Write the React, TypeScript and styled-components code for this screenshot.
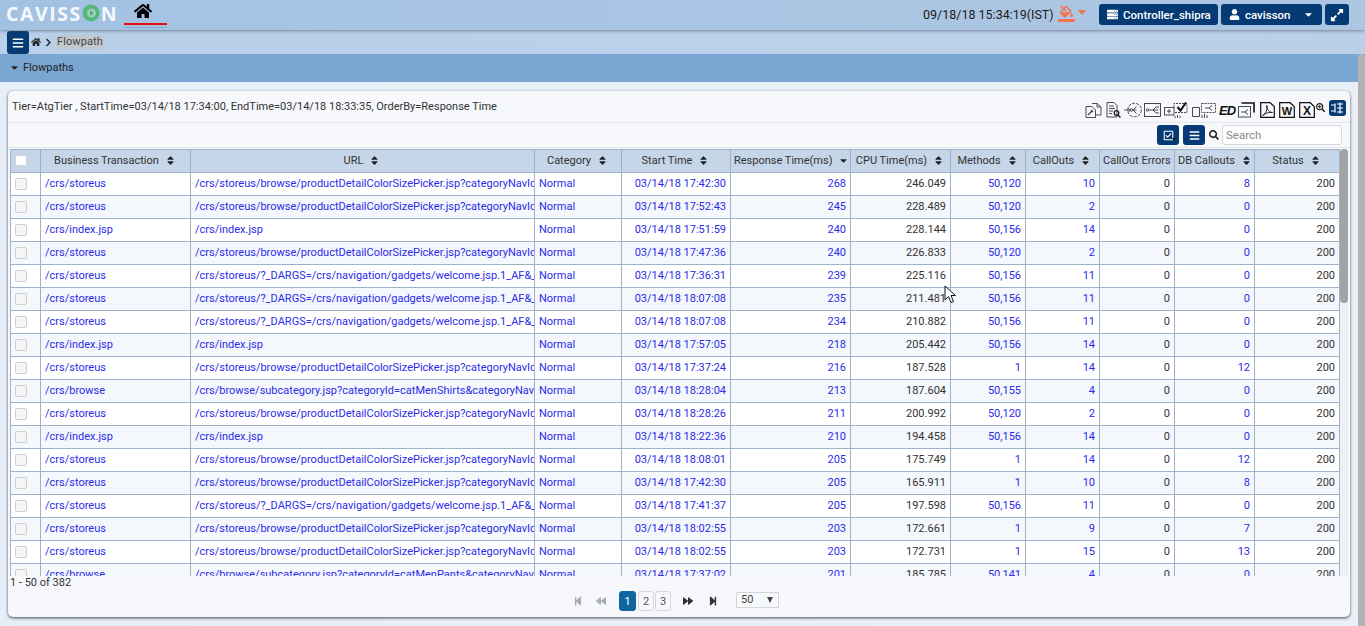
import React from "react";
import styled, { createGlobalStyle } from "styled-components";
import { FaHome, FaBars, FaSort, FaCaretDown, FaChevronRight, FaUser, FaExpandAlt, FaSearch, FaRegCheckSquare, FaStepBackward, FaStepForward, FaBackward, FaForward, FaServer, FaFillDrip, FaSearchPlus } from "react-icons/fa";

const Global = createGlobalStyle`
  html, body { margin: 0; padding: 0; height: 626px; overflow: hidden; background: #e8eff7; }
  body { font-family: Roboto, "Liberation Sans", sans-serif; font-size: 11px; color: #333; }
  * { box-sizing: border-box; }
`;

const Page = styled.div`
  position: relative;
  width: 1365px;
  height: 626px;
  overflow: hidden;
  background: linear-gradient(90deg, #e6eef7, #e9f0f8);
`;
const TopBar = styled.header`
  position: relative;
  z-index: 2;
  height: 30px;
  display: flex;
  align-items: flex-start;
  background: linear-gradient(90deg, #a3c2e2, #a9c5e3 50%, #adc6e2);
  box-shadow: 0 1px 3px rgba(60, 70, 90, 0.55);
`;
const Logo = styled.div`
  position: absolute;
  left: 6px;
  top: 2px;
  display: flex;
  align-items: center;
  height: 22px;
  color: #f4f8fc;
  font-family: "Open Sans", sans-serif;
  font-weight: 700;
  font-size: 19.5px;
  letter-spacing: 1.55px;
  svg { margin: 0 1px 0 0; }
`;
const HomeTab = styled.div`
  position: absolute;
  left: 124px;
  top: 0;
  width: 43px;
  height: 28px;
  display: flex;
  justify-content: center;
  padding: 2px 5px 0 0;
  color: #000;
  font-size: 18px;
  border-bottom: 1px solid #8fa9c6;
  &::after {
    content: "";
    position: absolute;
    left: 0;
    right: 0;
    top: 23px;
    height: 2px;
    background: #e60c0c;
  }
`;
const DateText = styled.span`
  position: absolute;
  left: 923px;
  top: 7px;
  font-size: 12.5px;
  color: #1c1c1c;
`;
const Paint = styled.div`
  position: absolute;
  left: 1058px;
  top: 5px;
  color: #f5744d;
  font-size: 13px;
  width: 17px;
  height: 17px;
  border-bottom: 3px solid #f5744d;
  display: flex;
  justify-content: center;
`;
const PaintCaret = styled.div`
  position: absolute;
  left: 1078px;
  top: 10px;
  width: 0;
  height: 0;
  border: 4.5px solid transparent;
  border-top: 5px solid #f5744d;
  border-bottom: 0;
`;
const NavButton = styled.div<{ $left: number; $width: number; $center?: boolean }>`
  position: absolute;
  left: ${p => p.$left}px;
  top: 4px;
  width: ${p => p.$width}px;
  height: 21px;
  border-radius: 3px;
  background: #053a74;
  color: #fff;
  font-size: 11.5px;
  font-weight: 500;
  display: flex;
  align-items: center;
  justify-content: ${p => (p.$center ? "center" : "flex-start")};
  padding: ${p => (p.$center ? "0" : "0 8px")};
  gap: 5px;
  svg { font-size: 11px; flex: none; }
`;
const NavCaret = styled.span`
  margin-left: auto;
  display: flex;
  font-size: 12px;
`;
const BigIcon = styled.span`
  display: flex;
  svg { font-size: 14px; }
`;
const Crumbs = styled.nav`
  position: relative;
  height: 24px;
  background: linear-gradient(90deg, #b9d0ea, #bccfe8);
  display: flex;
  align-items: center;
  padding-left: 7px;
`;
const MenuButton = styled.div`
  width: 22px;
  height: 23px;
  margin-top: 1px;
  background: #053a74;
  color: #fff;
  border-radius: 3px;
  display: flex;
  align-items: center;
  justify-content: center;
  font-size: 12px;
`;
const CrumbIcon = styled.span<{ $ml: number; $size: number }>`
  display: flex;
  margin-left: ${p => p.$ml}px;
  font-size: ${p => p.$size}px;
  color: #222;
`;
const CrumbText = styled.span`
  margin-left: 3px;
  padding: 0 1px;
  background: #c3c8cf;
  line-height: 14px;
  color: #444;
  letter-spacing: 0.1px;
`;
const AccordionHead = styled.div`
  height: 28px;
  background: #79a6d2;
  display: flex;
  align-items: center;
  padding-left: 9px;
  gap: 3px;
  color: #222;
  padding-bottom: 2px;
`;
const Card = styled.section`
  position: absolute;
  left: 8px;
  top: 91px;
  width: 1342px;
  height: 526px;
  background: #f6f8fb;
  border-radius: 5px;
  box-shadow: 0 1px 3px rgba(30, 30, 40, 0.8);
`;
const Summary = styled.div`
  position: absolute;
  left: 4px;
  top: 9px;
  font-size: 11px;
  color: #333;
`;
const ToolSlot = styled.div<{ $x: number; $y?: number }>`
  position: absolute;
  left: ${p => p.$x - 8}px;
  top: ${p => (p.$y ?? 102) - 91}px;
  display: flex;
`;
const EdMark = styled.span`
  font-family: "Liberation Sans", sans-serif;
  font-weight: 700;
  font-style: italic;
  font-size: 13px;
  letter-spacing: -1px;
  line-height: 15px;
  color: #111;
`;
const ZoomMark = styled.span`
  display: flex;
  font-size: 9px;
  color: #222;
`;
const BlueTool = styled.div`
  width: 17px;
  height: 16px;
  border-radius: 3px;
  background: #053a74;
  display: flex;
  align-items: center;
  justify-content: center;
`;
const ControlRow = styled.div`
  position: absolute;
  left: 0;
  right: 0;
  top: 31px;
  height: 26px;
  border-top: 1px solid #e3e6ea;
  border-bottom: 1px solid #e3e6ea;
`;
const SquareButton = styled.div<{ $left: number }>`
  position: absolute;
  left: ${p => p.$left}px;
  top: 2px;
  width: 22px;
  height: 20px;
  border-radius: 3px;
  background: #053a74;
  color: #fff;
  font-size: 11px;
  display: flex;
  align-items: center;
  justify-content: center;
`;
const MiniCaret = styled.span`
  position: absolute;
  right: 3px;
  bottom: 4px;
  border: 2.5px solid transparent;
  border-top: 3px solid #111;
  border-bottom: 0;
`;
const SearchGlyph = styled.span`
  position: absolute;
  left: 1201px;
  top: 7px;
  display: flex;
  font-size: 10px;
  color: #222;
`;
const SearchBox = styled.input`
  position: absolute;
  left: 1214px;
  top: 2px;
  width: 120px;
  height: 20px;
  border: 1px solid #d5d8dc;
  border-radius: 3px;
  background: #fff;
  padding: 0 3px;
  font: 11.5px Roboto, sans-serif;
  &::placeholder { color: #8a8a8a; opacity: 1; }
`;
const TableClip = styled.div`
  position: absolute;
  left: 2px;
  top: 58px;
  width: 1338px;
  height: 427px;
  overflow: hidden;
`;
const Grid = styled.table`
  table-layout: fixed;
  border-collapse: collapse;
  width: 1329px;
  background: #fff;
  font-size: 11px;
`;
const HeadCell = styled.th`
  height: 23px;
  padding: 0 4px 2px;
  border: 1px solid #9fb2ca;
  background: #c5d6e8;
  font-weight: 400;
  color: #333;
  text-align: center;
  white-space: nowrap;
  overflow: hidden;
`;
const HeadInner = styled.span`
  display: inline-flex;
  align-items: center;
  gap: 6px;
  margin-left: -1px;
  svg { font-size: 11px; color: #222; }
`;
const Row = styled.tr<{ $alt: boolean }>`
  background: ${p => (p.$alt ? "#f4f7fc" : "#fff")};
`;
const Cell = styled.td<{ $right?: boolean; $link?: boolean }>`
  height: 23px;
  padding: 0 4px 2px;
  border: 1px solid #9fb2ca;
  text-align: ${p => (p.$right ? "right" : "left")};
  color: ${p => (p.$link ? "#2b2bea" : "#333")};
  white-space: nowrap;
  overflow: hidden;
`;
const Check = styled.span<{ $head?: boolean }>`
  display: block;
  width: 12px;
  height: ${p => (p.$head ? 11 : 12)}px;
  margin: ${p => (p.$head ? "1px 0 0" : "1px 0 0")};
  border: 1px solid #d0d0d0;
  border-radius: 2px;
  background: ${p => (p.$head ? "#fff" : "#f5f5f5")};
`;
const TrackBar = styled.div`
  position: absolute;
  left: 1332px;
  top: 58px;
  width: 8px;
  height: 427px;
  background: #eef0f3;
`;
const Thumb = styled.div`
  width: 8px;
  height: 154px;
  border-radius: 4px;
  background: #a3a3a3;
`;
const Count = styled.div`
  position: absolute;
  left: 2px;
  top: 485px;
  color: #333;
`;
const Pager = styled.div`
  position: absolute;
  left: 0;
  top: 500px;
  width: 100%;
  height: 20px;
`;
const PagerIcon = styled.span<{ $left: number; $on?: boolean }>`
  position: absolute;
  left: ${p => p.$left}px;
  top: 5px;
  display: flex;
  font-size: 10px;
  color: ${p => (p.$on ? "#333" : "#a9adb2")};
`;
const PageNum = styled.span<{ $left: number; $on?: boolean }>`
  position: absolute;
  left: ${p => p.$left}px;
  top: 0;
  width: ${p => (p.$on ? 17 : 16)}px;
  height: 20px;
  border-radius: 3px;
  border: 1px solid ${p => (p.$on ? "#10659f" : "#d4d6d9")};
  background: ${p => (p.$on ? "#10659f" : "transparent")};
  color: ${p => (p.$on ? "#fff" : "#555")};
  display: flex;
  align-items: center;
  justify-content: center;
`;
const SizeSelect = styled.div`
  position: absolute;
  left: 728px;
  top: 1px;
  width: 43px;
  height: 16px;
  border: 1px solid #d4d6d9;
  color: #444;
  padding-left: 4px;
  line-height: 14px;
  display: flex;
  &::after {
    content: "";
    position: absolute;
    right: 5px;
    top: 4px;
    border: 3.5px solid transparent;
    border-top: 6px solid #444;
    border-bottom: 0;
  }
`;
const OuterScroll = styled.div`
  position: absolute;
  left: 1358px;
  top: 54px;
  width: 7px;
  height: 572px;
  background: #b2b2b2;
  border-radius: 4px 4px 0 0;
`;
const Pointer = styled.svg`
  position: absolute;
  left: 944px;
  top: 285px;
  z-index: 3;
`;

const A = "/crs/storeus/browse/productDetailColorSizePicker.jsp?categoryNavIds";
const B = "/crs/storeus/?_DARGS=/crs/navigation/gadgets/welcome.jsp.1_AF&_DAV";
const C = "/crs/browse/subcategory.jsp?categoryId=catMenShirts&categoryNavIds";
const D = "/crs/browse/subcategory.jsp?categoryId=catMenPants&categoryNavIds";
const S = "/crs/storeus";
const I = "/crs/index.jsp";
const R = "/crs/browse";

const rows: [string, string, string, string, string, string, string, string][] = [
  [S, A, "17:42:30", "268", "246.049", "50,120", "10", "8"],
  [S, A, "17:52:43", "245", "228.489", "50,120", "2", "0"],
  [I, I, "17:51:59", "240", "228.144", "50,156", "14", "0"],
  [S, A, "17:47:36", "240", "226.833", "50,120", "2", "0"],
  [S, B, "17:36:31", "239", "225.116", "50,156", "11", "0"],
  [S, B, "18:07:08", "235", "211.481", "50,156", "11", "0"],
  [S, B, "18:07:08", "234", "210.882", "50,156", "11", "0"],
  [I, I, "17:57:05", "218", "205.442", "50,156", "14", "0"],
  [S, A, "17:37:24", "216", "187.528", "1", "14", "12"],
  [R, C, "18:28:04", "213", "187.604", "50,155", "4", "0"],
  [S, A, "18:28:26", "211", "200.992", "50,120", "2", "0"],
  [I, I, "18:22:36", "210", "194.458", "50,156", "14", "0"],
  [S, A, "18:08:01", "205", "175.749", "1", "14", "12"],
  [S, A, "17:42:30", "205", "165.911", "1", "10", "8"],
  [S, B, "17:41:37", "205", "197.598", "50,156", "11", "0"],
  [S, A, "18:02:55", "203", "172.661", "1", "9", "7"],
  [S, A, "18:02:55", "203", "172.731", "1", "15", "13"],
  [R, D, "17:37:02", "201", "185.785", "50,141", "4", "0"],
];

const widths = [30, 150, 344, 87, 109, 120, 100, 75, 74, 75, 80, 85];
const heads = ["Business Transaction", "URL", "Category", "Start Time", "Response Time(ms)", "CPU Time(ms)", "Methods", "CallOuts", "CallOut Errors", "DB Callouts", "Status"];

const line = { fill: "none", stroke: "#4a4a4a", strokeWidth: 1 };
const dark = { fill: "none", stroke: "#111", strokeWidth: 1.2 };
const tree = "M5 3.5V8.5M3 6H7";

export default function App() {
  return (
    <Page>
      <Global />
      <TopBar>
        <Logo>
          CAVISS
          <svg width="18" height="18" viewBox="0 0 18 18">
            <circle cx="9" cy="9" r="8.5" fill="#55b77c" />
            <circle cx="9.5" cy="9" r="4.5" fill="#9ccfb4" />
            <path d="M8 6.5L11.5 9L8 11.5Z" fill="#4aa56f" />
          </svg>
          N
        </Logo>
        <HomeTab><FaHome /></HomeTab>
        <DateText>09/18/18 15:34:19(IST)</DateText>
        <Paint><FaFillDrip /></Paint>
        <PaintCaret />
        <NavButton $left={1099} $width={119}><FaServer />Controller_shipra</NavButton>
        <NavButton $left={1221} $width={101}><FaUser />cavisson<NavCaret><FaCaretDown /></NavCaret></NavButton>
        <NavButton $left={1325} $width={24} $center><BigIcon><FaExpandAlt /></BigIcon></NavButton>
      </TopBar>
      <Crumbs>
        <MenuButton><FaBars /></MenuButton>
        <CrumbIcon $ml={2} $size={10}><FaHome /></CrumbIcon>
        <CrumbIcon $ml={3} $size={9}><FaChevronRight /></CrumbIcon>
        <CrumbText>Flowpath</CrumbText>
      </Crumbs>
      <AccordionHead><FaCaretDown />Flowpaths</AccordionHead>
      <OuterScroll />
      <Card>
        <Summary>Tier=AtgTier , StartTime=03/14/18 17:34:00, EndTime=03/14/18 18:33:35, OrderBy=Response Time</Summary>
        <ToolSlot $x={1085}>
          <svg width="17" height="16" viewBox="0 0 17 16" {...line}>
            <path d="M7 1.5H12L16 5V13H11" /><path d="M12 1.5V5H16" />
            <path d="M1 4.5H7L10.5 8V15.5H1Z" /><path d="M3 13L7 9M6 8L8 10" strokeWidth="1.4" />
          </svg>
        </ToolSlot>
        <ToolSlot $x={1106}>
          <svg width="15" height="16" viewBox="0 0 15 16" {...line}>
            <path d="M1 .5H8L11 3.5V15H1Z" /><path d="M3 4H8M3 6.5H9M3 9H7M3 11.5H6" />
            <circle cx="10.5" cy="11" r="2.3" strokeWidth="1.3" stroke="#222" /><path d="M12 13L14.5 15.5" strokeWidth="1.5" stroke="#222" />
          </svg>
        </ToolSlot>
        <ToolSlot $x={1124}>
          <svg width="18" height="16" viewBox="0 0 18 16" {...line}>
            <circle cx="10.5" cy="8" r="6.8" strokeDasharray="3 1.2" />
            <path d="M0 8H6M4.5 6L6.5 8L4.5 10" /><circle cx="7.5" cy="8" r="1.2" /><path d="M9 8L12.5 4.5M9 8L12.5 11.5M12.5 8H9" />
          </svg>
        </ToolSlot>
        <ToolSlot $x={1144}>
          <svg width="17" height="16" viewBox="0 0 17 16" {...line}>
            <rect x=".5" y="1.5" width="16" height="13" />
            <circle cx="3.5" cy="8" r="1.2" /><path d="M5 8H9L12 5H15M9 8L12 11H15M9 8H14" />
          </svg>
        </ToolSlot>
        <ToolSlot $x={1164}>
          <svg width="24" height="16" viewBox="0 0 24 16" {...line}>
            <rect x=".5" y="5.5" width="9.5" height="7.5" /><path d="M3 9.2H7M5 7V11.5" />
            <path d="M10 5.5V1.5H23V10.5H10" strokeDasharray="2 1" />
            <path d="M11 14V16M13.5 13V16M16 14V16" />
            <path d="M13.5 5L16.5 8.5L22 0.5" {...dark} strokeWidth={2} />
          </svg>
        </ToolSlot>
        <ToolSlot $x={1192}>
          <svg width="24" height="16" viewBox="0 0 24 16" {...line}>
            <path d="M.5 5.5H7.5V14.5H.5Z" />
            <rect x="9.5" y="1.5" width="14" height="9" strokeDasharray="2 1" />
            <path d="M13 6H17M17 6L20 3.5M17 6L20 8.5" />
            <path d="M10 13V16M12.5 12V16M15 13V16" />
          </svg>
        </ToolSlot>
        <ToolSlot $x={1219} $y={103}><EdMark>ED</EdMark></ToolSlot>
        <ToolSlot $x={1238} $y={101}>
          <svg width="17" height="17" viewBox="0 0 17 17" {...line}>
            <rect x=".5" y="5.5" width="12" height="10.5" />
            <path d="M3.5 2H16V11.5" {...dark} strokeWidth={1.6} />
            <path d="M3 11H7M7 11L10 8.5M7 11L10 13.5" />
          </svg>
        </ToolSlot>
        <ToolSlot $x={1260}>
          <svg width="15" height="16" viewBox="0 0 15 16" {...dark}>
            <path d="M.7 .7H10L14.3 4.5V15.3H.7Z" /><path d="M2.5 13.5C6 11.5 7.5 7.5 6.8 3.5C7 8 9.5 10.5 12.5 10.5C9 10 5.5 11 2.5 13.5Z" strokeWidth=".9" />
          </svg>
        </ToolSlot>
        <ToolSlot $x={1279}>
          <svg width="16" height="16" viewBox="0 0 16 16" {...dark}>
            <path d="M.7 .7H11L15.3 4.5V15.3H.7Z" />
            <text x="8" y="13" textAnchor="middle" fontFamily="Liberation Sans" fontSize="11" fontWeight="700" fill="#111" stroke="none">W</text>
          </svg>
        </ToolSlot>
        <ToolSlot $x={1299}>
          <svg width="16" height="16" viewBox="0 0 16 16" {...dark}>
            <path d="M.7 .7H11L15.3 4.5V15.3H.7Z" />
            <text x="8" y="13" textAnchor="middle" fontFamily="Liberation Sans" fontSize="12" fontWeight="700" fill="#111" stroke="none">X</text>
          </svg>
        </ToolSlot>
        <ToolSlot $x={1316} $y={103}><ZoomMark><FaSearchPlus /></ZoomMark></ToolSlot>
        <ToolSlot $x={1329} $y={100}>
          <BlueTool>
            <svg width="13" height="12" viewBox="0 0 13 12" fill="none" stroke="#fff" strokeWidth="1.2">
              <path d="M0 3H4M0 9H4M4 1.5V10.5M6 2H12M6 6H12M6 10H12M9 .5V11.5" />
            </svg>
          </BlueTool>
        </ToolSlot>
        <ControlRow>
          <SquareButton $left={1149}><FaRegCheckSquare /><MiniCaret /></SquareButton>
          <SquareButton $left={1175}><FaBars /></SquareButton>
          <SearchGlyph><FaSearch /></SearchGlyph>
          <SearchBox placeholder="Search" readOnly />
        </ControlRow>
        <TableClip>
          <Grid>
            <colgroup>{widths.map((w, i) => <col key={i} width={w} />)}</colgroup>
            <thead>
              <tr>
                <HeadCell><Check $head /></HeadCell>
                {heads.map(h => (
                  <HeadCell key={h}>
                    <HeadInner>
                      {h}
                      {h === "CallOut Errors" ? null : h === "Response Time(ms)" ? <FaCaretDown /> : <FaSort />}
                    </HeadInner>
                  </HeadCell>
                ))}
              </tr>
            </thead>
            <tbody>
              {rows.map((r, i) => (
                <Row key={i} $alt={i % 2 === 1}>
                  <Cell><Check /></Cell>
                  <Cell $link>{r[0]}</Cell>
                  <Cell $link>{r[1]}</Cell>
                  <Cell $link>Normal</Cell>
                  <Cell $link $right>03/14/18 {r[2]}</Cell>
                  <Cell $link $right>{r[3]}</Cell>
                  <Cell $right>{r[4]}</Cell>
                  <Cell $link $right>{r[5]}</Cell>
                  <Cell $link $right>{r[6]}</Cell>
                  <Cell $right>0</Cell>
                  <Cell $link $right>{r[7]}</Cell>
                  <Cell $right>200</Cell>
                </Row>
              ))}
            </tbody>
          </Grid>
        </TableClip>
        <TrackBar><Thumb /></TrackBar>
        <Count>1 - 50 of 382</Count>
        <Pager>
          <PagerIcon $left={565}><FaStepBackward /></PagerIcon>
          <PagerIcon $left={588}><FaBackward /></PagerIcon>
          <PageNum $left={611} $on>1</PageNum>
          <PageNum $left={630}>2</PageNum>
          <PageNum $left={647}>3</PageNum>
          <PagerIcon $left={675} $on><FaForward /></PagerIcon>
          <PagerIcon $left={700} $on><FaStepForward /></PagerIcon>
          <SizeSelect>50</SizeSelect>
        </Pager>
      </Card>
      <Pointer width="13" height="19" viewBox="0 0 13 19">
        <path d="M1 1V15L4.5 11.5L7 17.5L9.5 16.5L7 10.5H11.5Z" fill="#fff" stroke="#111" strokeWidth="1" />
      </Pointer>
    </Page>
  );
}
